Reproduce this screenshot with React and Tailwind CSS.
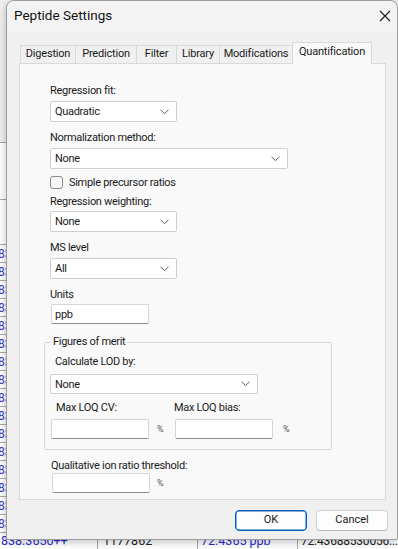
import React from "react";

function Chevron() {
  return (
    <svg width="9" height="6" viewBox="0 0 9 6" className="shrink-0">
      <path d="M0.5 0.8 L4.5 4.6 L8.5 0.8" fill="none" stroke="#5c5c5c" strokeWidth="1" />
    </svg>
  );
}

function Combo({ value, className }) {
  return (
    <div
      className={
        "flex items-center justify-between bg-white border border-[#cfcfcf] rounded-[2px] pl-[4px] pr-[7px] " +
        className
      }
    >
      <span className="text-[11px] tracking-[-0.3px] text-[#1a1a1a] leading-none">{value}</span>
      <Chevron />
    </div>
  );
}

function TextBox({ value, className }) {
  return (
    <div
      className={
        "flex items-center bg-white border border-[#d6d6d6] border-b-[#8a8a8a] rounded-[2px] pl-[3px] w-[98px] h-[20px] " +
        (className || "")
      }
    >
      <span className="text-[11px] tracking-[-0.3px] text-[#1a1a1a] leading-none">{value}</span>
    </div>
  );
}

function Label({ children, className }) {
  return (
    <div className={"text-[11px] tracking-[-0.3px] leading-[14px] text-[#1a1a1a] " + (className || "")}>{children}</div>
  );
}

function Pct({ className }) {
  return <span className={"text-[9px] text-[#555] leading-none mt-[6px] " + (className || "")}>%</span>;
}

const tabs = [
  { name: "Digestion", w: "w-[55px]" },
  { name: "Prediction", w: "w-[61px]" },
  { name: "Filter", w: "w-[40px]" },
  { name: "Library", w: "w-[43px]" },
  { name: "Modifications", w: "w-[73px]" },
];

const rows = Array.from({ length: 16 });

export default function App() {
  return (
    <div className="relative w-[398px] h-[549px] overflow-hidden bg-white font-[family-name:Roboto,sans-serif] flex flex-col">
      {/* application behind the dialog */}
      <div className="h-[143px] shrink-0 bg-[#f0f0f0] border-b border-[#a8a8a8]" />
      <div className="h-[57px] shrink-0 bg-white border-b border-[#a8a8a8]" />
      <div className="h-[45px] shrink-0 bg-white border-b border-[#a8a8a8]" />
      {rows.map((_, i) => (
        <div key={i} className="h-[18px] shrink-0 flex border-b border-[#a8a8a8]">
          <div className="w-[6px] overflow-hidden text-[12px] leading-[18px] text-[#3b3bd6] whitespace-nowrap">
            <span className="-ml-[2px]">838</span>
          </div>
        </div>
      ))}
      <div className="flex-1 flex text-[12.5px] leading-[16px] whitespace-nowrap">
        <div className="w-[98px] shrink-0 text-[#2a2ad0] pl-[1px] border-r border-[#a8a8a8]">838.3650++</div>
        <div className="w-[100px] shrink-0 text-[#222] pl-[5px] border-r border-[#a8a8a8]">1177862</div>
        <div className="w-[100px] shrink-0 text-[#2a2ad0] pl-[3px] border-r border-[#a8a8a8]">72.4365 ppb</div>
        <div className="flex-1 min-w-0 text-[12px] tracking-[-0.2px] text-[#222] pl-[3px]">72.43688530056...</div>
      </div>

      {/* dialog window */}
      <div className="absolute left-[6px] top-0 w-[392px] h-[540px] flex flex-col bg-[#f0f0f0] border border-[#9c9c9c] rounded-t-[8px] rounded-b-[2px] shadow-[0_2px_8px_rgba(0,0,0,0.25)]">
        <div className="h-[30px] shrink-0 flex items-center justify-between pl-[7px] pr-[6px] bg-[#f3f3f3] rounded-t-[8px]">
          <span className="text-[13.5px] text-[#111] leading-none">Peptide Settings</span>
          <svg width="12" height="12" viewBox="0 0 12 12">
            <path d="M1 1 L11 11 M11 1 L1 11" stroke="#1a1a1a" strokeWidth="1.1" />
          </svg>
        </div>

        <div className="ml-[12px] mt-[10px] w-[367px]">
          <div className="flex items-end h-[22px] pl-[1px]">
            {tabs.map((t) => (
              <div
                key={t.name}
                className={
                  "h-[18px] flex items-center justify-center border-t border-l border-[#d9d9d9] text-[11px] tracking-[-0.2px] text-[#1a1a1a] " +
                  t.w
                }
              >
                {t.name}
              </div>
            ))}
            <div className="relative z-10 -mb-[1px] h-[22px] w-[80px] flex items-center justify-center pb-[2px] bg-[#f9f9f9] border-t border-l border-r border-[#d9d9d9] text-[11px] tracking-[-0.2px] text-[#1a1a1a]">
              Quantification
            </div>
          </div>

          <div className="h-[437px] bg-[#f9f9f9] border border-[#d9d9d9] flex flex-col">
            <div className="pl-[30px]">
              <Label className="mt-[20px]">Regression fit:</Label>
              <Combo value="Quadratic" className="mt-[3px] w-[127px] h-[21px]" />

              <Label className="mt-[9px]">Normalization method:</Label>
              <Combo value="None" className="mt-[3px] w-[238px] h-[21px]" />

              <div className="mt-[7px] flex items-center h-[13px]">
                <div className="w-[13px] h-[13px] rounded-[3px] border border-[#8a8a8a] bg-[#f7f7f7]" />
                <span className="ml-[6px] text-[11px] tracking-[-0.3px] text-[#1a1a1a] leading-none">
                  Simple precursor ratios
                </span>
              </div>

              <Label className="mt-[6px]">Regression weighting:</Label>
              <Combo value="None" className="mt-[2px] w-[127px] h-[21px]" />

              <Label className="mt-[9px]">MS level</Label>
              <Combo value="All" className="mt-[3px] w-[127px] h-[21px]" />

              <Label className="mt-[9px]">Units</Label>
              <TextBox value="ppb" className="mt-[2px] ml-[1px]" />
            </div>

            <fieldset className="ml-[24px] mt-[11px] w-[288px] h-[115px] border border-[#d9d9d9] rounded-[2px] px-0 pb-0">
              <legend className="ml-[6px] px-[2px] text-[11px] tracking-[-0.3px] leading-[14px] text-[#1a1a1a]">
                Figures of merit
              </legend>
              <Label className="ml-[10px] mt-[6px]">Calculate LOD by:</Label>
              <Combo value="None" className="ml-[5px] mt-[5px] w-[208px] h-[20px]" />
              <div className="mt-[7px] flex">
                <div className="ml-[6px] w-[123px]">
                  <Label className="ml-[5px]">Max LOQ CV:</Label>
                  <div className="mt-[4px] flex items-start">
                    <TextBox value="" />
                    <Pct className="ml-[8px]" />
                  </div>
                </div>
                <div className="w-[130px]">
                  <Label>Max LOQ bias:</Label>
                  <div className="mt-[4px] flex items-start">
                    <TextBox value="" className="ml-[1px]" />
                    <Pct className="ml-[10px]" />
                  </div>
                </div>
              </div>
            </fieldset>

            <div className="pl-[31px]">
              <Label className="mt-[9px]">Qualitative ion ratio threshold:</Label>
              <div className="flex items-start">
                <TextBox value="" className="ml-[1px]" />
                <Pct className="ml-[7px]" />
              </div>
            </div>
          </div>
        </div>

        <div className="mt-[10px] flex justify-end gap-[9px] pr-[9px]">
          <button className="w-[72px] h-[21px] rounded-[4px] bg-[#fdfdfd] border border-[#005fb8] shadow-[inset_0_0_0_0.5px_#005fb8] text-[11px] text-[#1a1a1a]">
            OK
          </button>
          <button className="w-[72px] h-[21px] rounded-[4px] bg-[#fdfdfd] border border-[#d0d0d0] border-b-[#b5b5b5] text-[11px] text-[#1a1a1a]">
            Cancel
          </button>
        </div>
      </div>
    </div>
  );
}
